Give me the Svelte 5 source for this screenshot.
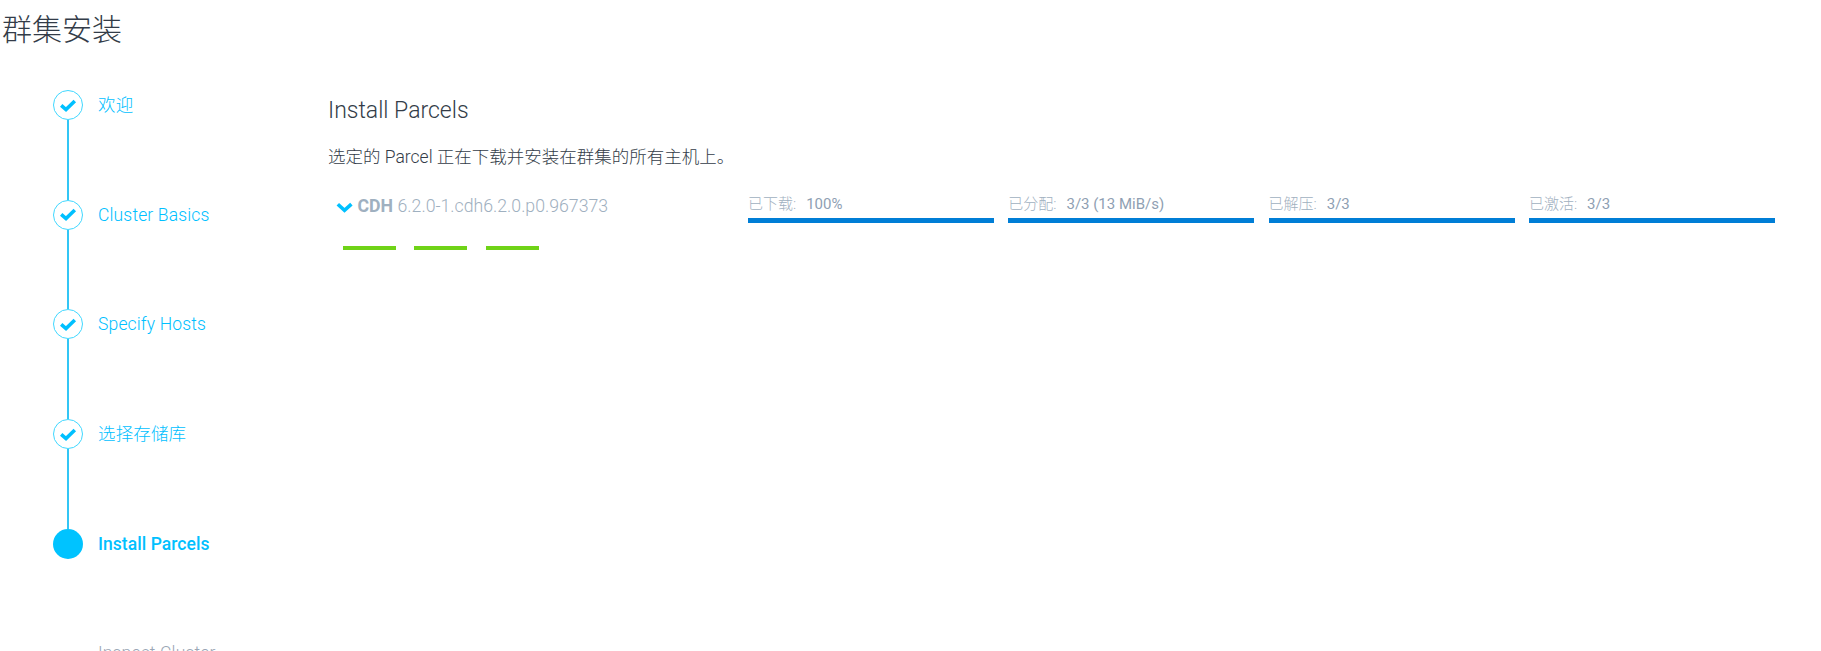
<script>
  const steps = [
    { label: '欢迎', state: 'done' },
    { label: 'Cluster Basics', state: 'done' },
    { label: 'Specify Hosts', state: 'done' },
    { label: '选择存储库', state: 'done' },
    { label: 'Install Parcels', state: 'active' },
    { label: 'Inspect Cluster', state: 'todo' }
  ];
  const bars = [
    { name: '已下载:', value: '100%' },
    { name: '已分配:', value: '3/3 (13 MiB/s)' },
    { name: '已解压:', value: '3/3' },
    { name: '已激活:', value: '3/3' }
  ];
</script>

<div class="page">
  <h1>群集安装</h1>
  <div class="wizard">
    <ol class="steps">
      {#each steps as s, i}
        <li class="step {s.state}">
          <div class="rail">
            <span class="dot">
              {#if s.state === 'done'}
                <svg width="18" height="15" viewBox="0 0 18 15"><path d="M2.2 7.4 L7 11.6 L15.8 3" fill="none" stroke="#00c0ff" stroke-width="3.6" /></svg>
              {/if}
            </span>
            {#if i < 4}<span class="line"></span>{/if}
          </div>
          <span class="label">{s.label}</span>
        </li>
      {/each}
    </ol>
    <main class="content">
      <h2>Install Parcels</h2>
      <p class="desc">选定的 Parcel 正在下载并安装在群集的所有主机上。</p>
      <div class="parcel">
        <div class="left">
          <div class="name">
            <svg class="chev" width="17" height="11" viewBox="0 0 17 11"><path d="M1.8 2.2 L8.5 8.4 L15.4 2.2" fill="none" stroke="#00c0ff" stroke-width="3.6" /></svg>
            <b>CDH</b> <span>6.2.0-1.cdh6.2.0.p0.967373</span>
          </div>
          <div class="hosts">
            <i></i><i></i><i></i>
          </div>
        </div>
        <div class="bars">
          {#each bars as b}
            <div class="bar">
              <div class="cap"><span class="k">{b.name}</span><span class="v">{b.value}</span></div>
              <div class="fill"></div>
            </div>
          {/each}
        </div>
      </div>
    </main>
  </div>
</div>

<style>
  :global(body) { margin: 0; background: #fff; }
  .page {
    height: 651px;
    overflow: hidden;
    font-family: Roboto, "Noto Sans CJK SC", sans-serif;
    color: #333c48;
  }
  h1 {
    margin: 0;
    padding: 10px 0 0 2px;
    font-size: 30px;
    line-height: 40px;
    font-weight: 300;
    height: 40px;
  }
  .wizard { display: flex; padding-top: 40px; }
  .steps { list-style: none; margin: 0; padding: 0 0 0 53px; width: 275px; box-sizing: content-box; }
  .step { display: flex; height: 109.7px; gap: 15px; }
  .rail { width: 30px; display: flex; flex-direction: column; align-items: center; }
  .dot {
    width: 30px; height: 30px; flex: none; box-sizing: border-box; border-radius: 50%;
    display: flex; align-items: center; justify-content: center;
  }
  .done .dot { border: 1px solid #40d8ff; }
  .active .dot { background: #00c3ff; }
  .line { width: 2px; flex: 1; background: #33c6f5; margin-left: -1px; }
  .label { font-size: 17.5px; letter-spacing: .15px; line-height: 31px; font-weight: 300; color: #00c0ff; }
  .active .label { font-weight: 500; letter-spacing: .05px; color: #00c0ff; }
  .todo .label { color: #9aa6b5; }
  .todo .dot { visibility: hidden; }
  .content { flex: 1; }
  h2 { margin: 0; font-size: 23px; font-weight: 300; line-height: 28px; padding-top: 7px; height: 33px; }
  .desc { margin: 15px 0 0; font-size: 17.5px; line-height: 24px; font-weight: 300; height: 24px; }
  .parcel { display: flex; margin-top: 23px; }
  .left { width: 420px; flex: none; }
  .name { font-size: 17.7px; line-height: 28px; color: #9fb0c0; font-weight: 300; padding-left: 8px; display: flex; align-items: center; gap: 4.5px; }
  .name b { font-weight: 700; }
  .chev { margin-top: 2px; }
  .hosts { display: flex; gap: 18.4px; padding: 26px 0 0 15px; }
  .hosts i { display: block; width: 53px; height: 4px; background: #6fd317; }
  .bars { display: flex; gap: 14.3px; width: 1028px; flex: none; padding-top: 3px; align-self: flex-start; }
  .bar { width: 246px; flex: none; }
  .cap { font-size: 15px; line-height: 18px; color: #9fb0c0; display: flex; gap: 10px; height: 23px; font-weight: 300; white-space: nowrap; }
  .v { font-weight: 400; color: #8f9fb3; }
  .fill { height: 5px; background: #007ed6; }
</style>
